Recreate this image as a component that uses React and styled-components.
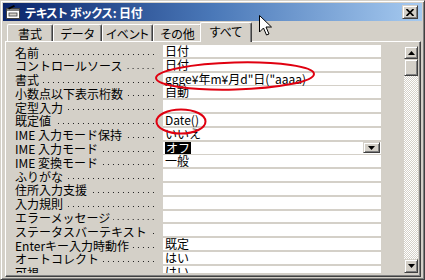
import React from "react"
import styled, { createGlobalStyle, css } from "styled-components"

const GlobalStyle = createGlobalStyle`
  * { box-sizing: border-box; }
  html, body {
    margin: 0;
    padding: 0;
    background: #d4d0c8;
  }
  body {
    width: 425px;
    height: 280px;
    overflow: hidden;
    font-family: "Noto Sans CJK JP", "Noto Sans", sans-serif;
    font-size: 12px;
    color: #000;
  }
`

const raised = css`
  background: #d4d0c8;
  border: 1px solid;
  border-color: #d4d0c8 #404040 #404040 #d4d0c8;
  box-shadow: inset 1px 1px #fff, inset -1px -1px #808080;
`

const Window = styled.div`
  position: relative;
  width: 425px;
  height: 280px;
  ${raised}
  padding: 2px;
  display: flex;
  flex-direction: column;
`

const TitleBar = styled.div`
  height: 18px;
  flex-shrink: 0;
  display: flex;
  align-items: center;
  padding: 0 4px 0 2px;
  background: linear-gradient(to right, #0a246a, #4a78b8 50%, #a6caf0);
  color: #fff;
  font-weight: bold;
  font-size: 12px;
  font-feature-settings: "palt";
  letter-spacing: -0.2px;
`

const TitleIcon = styled.svg`
  width: 16px;
  height: 16px;
  margin-right: 4px;
  flex-shrink: 0;
`

const TitleText = styled.span`
  flex: 1;
  white-space: nowrap;
`

const CloseButton = styled.div`
  ${raised}
  width: 16px;
  height: 14px;
  display: flex;
  align-items: center;
  justify-content: center;
`

const TabStrip = styled.div`
  height: 20px;
  flex-shrink: 0;
  display: flex;
  align-items: flex-end;
  padding-left: 4px;
  position: relative;
  z-index: 1;
`

const Tab = styled.div`
  width: ${p => p.$w}px;
  height: ${p => (p.$active ? 20 : 17)}px;
  margin: ${p => (p.$active ? "0 0 -1px -2px" : "0")};
  background: #d4d0c8;
  border-top: 1px solid #fff;
  border-left: 1px solid #fff;
  border-right: 1px solid #404040;
  border-radius: 2px 2px 0 0;
  box-shadow: inset -1px 0 #808080;
  display: flex;
  align-items: ${p => (p.$active ? "flex-start" : "center")};
  padding-top: ${p => (p.$active ? 1 : 0)}px;
  justify-content: center;
  font-size: 12px;
  font-feature-settings: "palt";
  line-height: 15px;
  white-space: nowrap;
`

const Sheet = styled.div`
  flex: 1;
  min-height: 0;
  margin: 0 1px 0 2px;
  border: 1px solid;
  border-color: #fff #404040 #404040 #fff;
  box-shadow: inset -1px -1px #808080;
  padding: 3px 2px 3px 3px;
`

const ListArea = styled.div`
  height: 100%;
  display: flex;
  overflow: hidden;
`

const Grid = styled.div`
  width: 372px;
  flex-shrink: 0;
  overflow: hidden;
`

const Row = styled.div`
  display: grid;
  grid-template-columns: 154px 218px;
  height: 13.8px;
`

const Label = styled.div`
  display: flex;
  align-items: center;
  padding: 0 9px 0 6px;
  line-height: 13px;
  white-space: nowrap;
`

const Leader = styled.span`
  flex: 1;
  align-self: stretch;
  margin-left: 3px;
  background-image: linear-gradient(to left, #222 1px, transparent 1px);
  background-size: 5px 1px;
  background-repeat: repeat-x;
  background-position: right bottom 4px;
`

const Value = styled.div`
  display: flex;
  align-items: center;
  background: #fff;
  border-bottom: 2px solid #d4d0c8;
  padding-left: 2px;
  line-height: 12px;
  white-space: nowrap;
`

const Selected = styled.span`
  background: #000;
  color: #fff;
  padding: 0 1px;
`

const DropButton = styled.div`
  ${raised}
  margin-left: auto;
  margin-right: 1px;
  width: 17px;
  height: 11px;
  display: flex;
  align-items: center;
  justify-content: center;
`

const Scrollbar = styled.div`
  width: 14px;
  margin-left: auto;
  padding-top: 1px;
  display: flex;
  flex-direction: column;
`

const ScrollButton = styled.div`
  ${raised}
  width: 14px;
  height: ${p => p.$h}px;
  flex-shrink: 0;
  display: flex;
  align-items: center;
  justify-content: center;
`

const Track = styled.div`
  flex: 1;
  background: conic-gradient(#d4d0c8 25%, #fff 0 50%, #d4d0c8 0 75%, #fff 0);
  background-size: 2px 2px;
`

const Cursor = styled.svg`
  position: absolute;
  left: 258px;
  top: 14px;
  width: 13px;
  height: 21px;
  z-index: 5;
`

const Marks = styled.svg`
  position: absolute;
  left: 0;
  top: 0;
  width: 425px;
  height: 280px;
  pointer-events: none;
  z-index: 4;
`

const Arrow = ({ up }) => (
  <svg width="7" height="4" viewBox="0 0 7 4">
    <polygon points={up ? "3.5,0 7,4 0,4" : "0,0 7,0 3.5,4"} fill="#000" />
  </svg>
)

const tabs = [
  { name: "書式", w: 46 },
  { name: "データ", w: 49 },
  { name: "イベント", w: 51 },
  { name: "その他", w: 49 },
  { name: "すべて", w: 52, active: true },
]

const props = [
  ["名前", "日付"],
  ["コントロールソース", "日付"],
  ["書式", "ggge¥年m¥月d\"日(\"aaaa)"],
  ["小数点以下表示桁数", "自動"],
  ["定型入力", ""],
  ["既定値", "Date()"],
  ["IME 入力モード保持", "いいえ"],
  ["IME 入力モード", "オフ", "select"],
  ["IME 変換モード", "一般"],
  ["ふりがな", ""],
  ["住所入力支援", ""],
  ["入力規則", ""],
  ["エラーメッセージ", ""],
  ["ステータスバーテキスト", ""],
  ["Enterキー入力時動作", "既定"],
  ["オートコレクト", "はい"],
  ["可視", "はい"],
]

export default function App() {
  return (
    <>
      <GlobalStyle />
      <Window>
        <TitleBar>
          <TitleIcon viewBox="0 0 16 16">
            <rect x="1.5" y="4.5" width="13" height="10" fill="#fff" stroke="#404040" />
            <rect x="2" y="5" width="12" height="2" fill="#808080" />
            <rect x="4" y="9" width="8" height="3" fill="#d4d0c8" stroke="#404040" strokeWidth="0.8" />
            <path d="M3 4 L9 1 L10 2.5 L4 5.5 Z" fill="#000" />
          </TitleIcon>
          <TitleText>テキスト ボックス: 日付</TitleText>
          <CloseButton>
            <svg width="8" height="7" viewBox="0 0 8 7">
              <path d="M0.5 0 L7.5 7 M7.5 0 L0.5 7" stroke="#000" strokeWidth="1.7" />
            </svg>
          </CloseButton>
        </TitleBar>
        <TabStrip>
          {tabs.map(t => (
            <Tab key={t.name} $w={t.w} $active={t.active}>
              {t.name}
            </Tab>
          ))}
        </TabStrip>
        <Sheet>
          <ListArea>
            <Grid>
              {props.map(([label, value, kind]) => (
                <Row key={label}>
                  <Label>
                    {label}
                    <Leader />
                  </Label>
                  <Value>
                    {kind === "select" ? <Selected>{value}</Selected> : value}
                    {kind === "select" && (
                      <DropButton>
                        <Arrow />
                      </DropButton>
                    )}
                  </Value>
                </Row>
              ))}
            </Grid>
            <Scrollbar>
              <ScrollButton $h={13}>
                <Arrow up />
              </ScrollButton>
              <ScrollButton $h={17} />
              <Track />
              <ScrollButton $h={14}>
                <Arrow />
              </ScrollButton>
            </Scrollbar>
          </ListArea>
        </Sheet>
        <Marks viewBox="0 0 425 280">
          <ellipse cx="234" cy="75" rx="79" ry="13.5" fill="none" stroke="#e00010" strokeWidth="2" transform="rotate(-1.5 234 75)" />
          <ellipse cx="180" cy="120.5" rx="24.5" ry="12" fill="none" stroke="#e00010" strokeWidth="2" />
        </Marks>
        <Cursor viewBox="0 0 13 21">
          <path d="M0.5 0.5 L0.5 17 L4.5 13 L7.5 20 L10 19 L7 12 L12.5 12 Z" fill="#fff" stroke="#000" strokeWidth="1" />
        </Cursor>
      </Window>
    </>
  )
}
